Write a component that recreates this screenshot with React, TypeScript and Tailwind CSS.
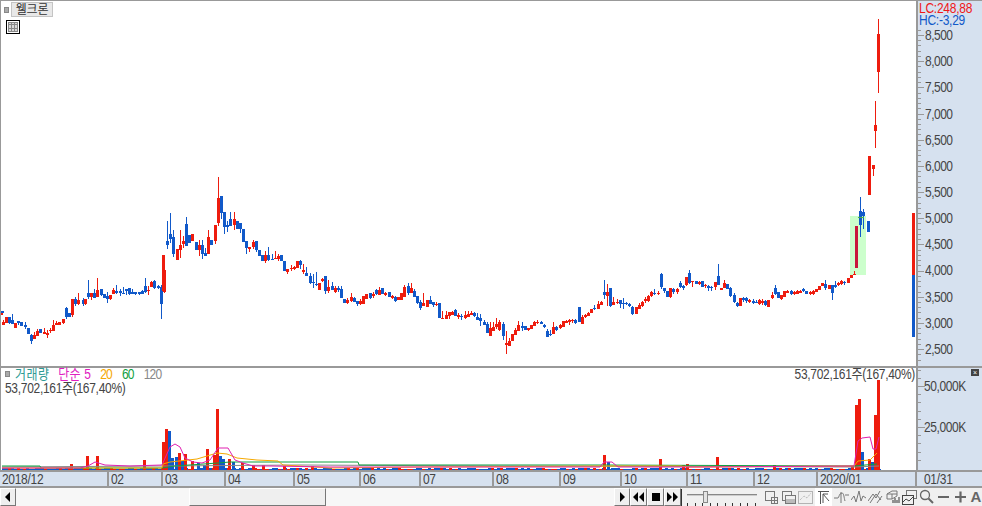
import React from "react";

type C = { x: number; t: number; b: number; wt: number; wb: number; c: string };
const RED = "#ee1c0e";
const BLUE = "#1159c9";

function seg(x0: number, y0: number, s: string): C[] {
  return s
    .trim()
    .split(";")
    .map((e) => e.trim())
    .filter(Boolean)
    .map((e) => {
      const p = e.split(" ");
      const px = Number(p[0].slice(1));
      const t = Number(p[1]);
      const b = Number(p[2]);
      const wt = p[3] && p[3] !== "0" ? Number(p[3]) : t;
      const wb = p[4] ? Number(p[4]) : b;
      return {
        x: Math.round(x0 + px / 3),
        t: y0 + t / 3,
        b: y0 + b / 3,
        wt: y0 + wt / 3,
        wb: y0 + wb / 3,
        c: p[0][0] === "r" ? RED : BLUE,
      };
    });
}

const candles: C[] = [
  ...seg(0, 252, "r1 180 190;b4 176 184"),
  ...seg(0, 270, `r7 157 165 150;r16 141 158;b25 141 158 0 162;b34 150 162 132;r43 159 174;b52 153 160 0 165;b61 155 168;b73 165 171 156 177;b82 174 192;b91 195 213 192 222;r100 195 207 186;r109 183 198 178;b118 177 189;r130 186 192 174;r139 189 195 180 204;r148 180 183 174 189;r157 165 183 150;r166 159 165 153;r175 156 165;r187 147 159 0 162;b196 114 141 111 147;b205 128 141;r214 87 135 0 141;b223 87 103 82 108;r232 90 102 69 105;b245 90 102 85 108;r253 87 102 0 105;b262 69 81 30 87;r271 69 81 0 90;b280 69 84 57;r289 60 81 24;b301 57 75 0 78;b310 72 84;b319 78 87 67 99;r328 75 87 0 90;r337 60 72 55;b346 63 69 45 72;b358 63 69 58 78;b367 68 70 51 72;b376 57 63 0 75;b385 54 72 0 75;b394 66 72 57;b403 66 72 0 75;b415 66 72 0 75;b424 63 72 60;b433 48 66 24 70;r442 60 63 48 75;r451 36 51 33;b460 33 54 30 57;b472 48 54 45 57;b481 51 102 45 147;r490 0 66 0 69`),
  ...seg(130, 170, `b109 213 225 153 237;b118 192 207 129 219;b127 201 252 180 260;r139 237 270;r148 225 240 180 265;r157 213 222 198 235;b166 162 228 141;b175 195 219;r184 192 213;b196 216 240;r205 225 240 210 258;b214 225 252 210 266;b223 250 258 234;r232 201 252 180;b241 210 225;r253 165 213 0 221;r262 84 159 21 168;b271 78 128 0 147;b280 126 171 0 192;b289 165 171 153 186;b298 147 168 126;r310 147 165 126 180;b319 153 177;b328 159 177 0 189;b337 177 216;b346 213 234 0 252;r355 231 237 0 246;r367 216 231 210 237;b376 213 240 0 246;b385 240 258;b394 255 273;r403 255 273 243 279;b412 255 270 231 273;b424 267 269 252;r433 264 268 243;r442 258 267 252 273;b451 255 273;b460 273 303;r469 297 306 0 312;r481 294 297 285 303;r490 291 297 288 300;r499 273 294;b508 273 285 270 297;r517 300 306 282 312;b526 309 318 291;b538 318 339 309 342;b547 336 338 312 354;b556 342 345 306 348;r565 339 360;r574 327 333 324 336`),
  ...seg(320, 270, `b13 18 63 0 72;r22 51 63 30 69;b34 48 60 36;r43 54 66 48 69;b52 54 60 48 66;b61 57 84 48;b70 87 99;r79 90 99 84 102;r91 81 93 69 96;b100 84 96 81;b109 93 102 0 108;r118 93 102 87 105;r127 78 102;r136 72 87;b148 69 84 0 87;r157 72 78 66 84;b166 60 72 57 75;r175 60 75 51;b184 54 72;r193 69 75 66 78;b205 66 81;r214 78 84 75 87;b223 81 93 78 96;r232 81 90`),
  ...seg(400, 270, `r1 69 90;r10 51 81 45;b22 48 69 39 75;r31 54 69 39;b40 63 81 57;b49 78 100 0 102;b58 96 114 90 120;r67 99 108 69;r79 90 111;b88 90 102 78;b97 96 105 0 111;r106 102 105 96 108;b115 99 144;r124 144 148 123;r136 135 147 123;r145 126 138 0 147;r154 126 135 123;b163 120 138 117;r172 135 141 129 147;b181 138 141 132 150;r193 135 144 123 147;r202 132 141 123;r211 129 135 123;b220 129 138 126 141;b229 141 150 129;b238 144 153 132 168;b250 156 165 150;b259 162 189 156;r268 174 198 156;r277 171 183 156;r286 162 171 144 178;r295 156 180 150 183;b307 162 198 156 210;r316 219 225 183 252;r325 213 228 204;r334 192 213;r343 180 195 174;r352 165 183 153;b364 168 174 156 183;b373 168 180;r382 174 180 0 183;r391 165 177;r400 156 168 153;r409 156 159 150 162;b421 156 162 153;b430 165 171 162 174;b439 183 201 177;b448 192 195 180 198;r457 171 192 156;b466 171 180 168 183;r478 165 174 162 177;r487 153 171;r496 153 159 150;r505 150 156 147 165;r514 150 154 147 159;b523 150 159 147 162;b535 111 156;r544 141 162 135;r553 135 141 132 144;r562 129 138 126;r571 117 129;b580 114 117 105 120;r592 102 117 93;r601 96 105 93;b610 66 75 30 87;r619 66 78 42 108;b628 54 108 0 111;r637 96 105 81;r649 96 99 87 102;b658 90 102 0 114;b667 99 102 84 117;b676 99 102 96 105;b685 102 108 99 111;b694 111 132 108 135;r706 111 132;r715 105 117 99`),
  ...seg(620, 250, `r64 156 168 153 171;r73 147 153 141 159;r82 138 153 135 156;r91 126 138 123 141;b100 129 132 117 135;r112 129 131 123 135;b121 72 111 69 117;b130 114 123 0 129;b139 123 141;r148 114 141 0 144;b157 117 126 114 132;r169 117 126 114 132;b178 99 111 93 114;b187 108 114 105 120;r196 81 105 0 108;b205 69 99 60 102;r214 93 96 0 111;b226 93 102;r235 96 102 93 105;b244 93 111;r253 105 108 102 114;b262 108 114 105 123;b271 111 114 108 123;r283 96 111 0 120;b292 78 105 42;r301 114 120;r310 99 114 90;b319 102 117;b328 114 138 111 141;b340 135 156 129 159;b349 159 168 156 171;r358 144 168;b367 144 150 141 156;b376 144 153 141 159;r385 150 156 147 159;b397 153 159 147 162;b406 156 159 150;r415 150 162 147 165;r424 153 159 147 165;b433 153 165 150 168;r442 150 171;r454 135 144 126 147;b463 114 132 105 135;b472 126 144;r481 135 147 0 150;r490 123 141;r499 123 129 120;b511 123 132 120 135;r520 126 132 123 135;r529 123 132 120;r538 123 129 120;b547 117 123 114 126;b556 123 132;r568 126 132 123 135;r577 123 132 120 135;r586 117 126;r595 108 120;r604 99 108;b613 102 114 90 120;r625 105 117;b634 105 129 0 150;b643 105 111 93 114;r652 99 105 96 108`),
  ...seg(820, 180, `r61 303 312 300 316;b70 305 310 303 315;r82 294 310;r91 285 295;r100 281 285 273 285;b118 93 135 51 171;b127 96 108 87 147;b141 123 156`),
];

const big = [
  { x: 162, t: 255, b: 291, c: RED },
  { x: 855, t: 226, b: 268, c: "#c8173c" },
  { x: 868, t: 156, b: 195, c: RED },
];

const volBars: [number, number, string][] = [
  [70, 464, RED], [86, 456, RED], [96, 456, RED], [143, 460, RED], [162, 442, RED], [165, 429, RED], [168, 431, BLUE],
  [171, 458, BLUE], [175, 457, BLUE], [178, 453, RED], [181, 461, BLUE], [184, 454, RED], [191, 461, RED], [197, 463, BLUE],
  [203, 465, BLUE], [206, 449, RED], [213, 455, RED], [216, 409, RED], [219, 456, BLUE], [222, 459, BLUE], [228, 459, RED],
  [232, 462, BLUE], [241, 463, RED], [252, 465, RED], [262, 465, RED], [283, 466, RED], [311, 466, RED], [603, 455, RED],
  [607, 462, BLUE], [659, 459, RED], [682, 465, RED], [686, 464, RED], [716, 457, RED], [773, 465, RED], [851, 466, RED],
  [855, 405, RED], [858, 399, RED], [861, 452, BLUE], [868, 459, RED], [871, 462, BLUE], [874, 415, RED], [877, 380, RED],
];

function baseStrip() {
  const out: React.ReactNode[] = [];
  let n = 0;
  for (let x = 2; x < 880; x += 3) {
    n = (n * 31 + 17) % 97;
    const h = 1 + (n % 2);
    out.push(<rect key={x} x={x} y={470 - h} width={3} height={h} fill={n % 3 ? BLUE : RED} />);
  }
  return out;
}

const magenta =
  "2,468 80,468 88,466 95,462 105,465 130,466 162,465 170,447 175,444 180,447 185,458 193,462 202,463 210,460 218,448 228,448 235,460 243,463 253,466 270,466 330,467 420,467 600,467 604,462 612,462 618,467 700,467 854,466 858,441 862,438 870,437 873,449 876,449 879,437";
const orange =
  "2,468 162,468 163,464 170,462 197,459 217,453 227,454 237,458 257,460 278,461 283,465 330,468 420,467 605,466 680,466 690,467 854,466 858,461 870,460 877,453";
const green = "2,466 40,466 41,468 162,468 175,466 218,463 230,462 358,462 359,465 600,465 854,466 877,464";
const gray = "2,467 160,466 300,465 500,466 854,467 879,466";

const priceLabels = ["8,500", "8,000", "7,500", "7,000", "6,500", "6,000", "5,500", "5,000", "4,500", "4,000", "3,500", "3,000", "2,500"];
const dates: [string, number][] = [
  ["2018/12", 108], ["02", 54], ["03", 63], ["04", 69], ["05", 66], ["06", 60], ["07", 73], ["08", 67], ["09", 61], ["10", 66], ["11", 67], ["12", 63], ["2020/01", 99],
];

const btn3d = "border border-t-white border-l-white border-r-[#777] border-b-[#777] bg-[#efefef] shadow-[1px_1px_0_#333]";

function T({ children, className = "" }: { children: React.ReactNode; className?: string }) {
  return <span className={`inline-block whitespace-nowrap scale-y-[1.15] leading-[10px] ${className}`}>{children}</span>;
}

function TB({ children, w = 15 }: { children: React.ReactNode; w?: number }) {
  return (
    <svg width={w} height={16} viewBox={`0 0 ${w} 16`} fill="none" stroke="#777" strokeWidth={1}>
      {children}
    </svg>
  );
}

export default function App() {
  return (
    <div className="w-[982px] h-[506px] flex flex-col bg-white overflow-hidden text-[12px] leading-[14px] tracking-[-0.3px] text-[#444] font-['Liberation_Sans','Noto_Sans_CJK_KR',sans-serif]">
      {/* price pane */}
      <div className="h-[366px] flex border-t border-[#999]">
        <div className="relative w-[916px] border-l border-[#999]">
          <svg width={915} height={365} viewBox="1 1 915 365" shapeRendering="crispEdges" className="block">
            <rect x={850} y={216} width={16} height={59} fill="#ccffcc" />
            {candles.map((c, i) => (
              <g key={i} fill={c.c}>
                <rect x={c.x + 1} y={c.wt} width={1} height={Math.max(0, c.wb - c.wt)} />
                <rect x={c.x} y={c.t} width={3} height={Math.max(1, c.b - c.t)} />
              </g>
            ))}
            {big.map((b, i) => (
              <rect key={i} x={b.x} y={b.t} width={3} height={b.b - b.t} fill={b.c} />
            ))}
            <rect x={858} y={217} width={6} height={1} fill="#4caf50" />
            <rect x={872} y={165} width={3} height={4} fill={RED} />
            <rect x={873} y={165} width={1} height={11} fill={RED} />
            <rect x={875} y={101} width={1} height={47} fill={RED} />
            <rect x={874} y={125} width={3} height={6} fill={RED} />
            <rect x={878} y={19} width={1} height={74} fill={RED} />
            <rect x={877} y={34} width={3} height={38} fill={RED} />
            <rect x={912} y={213} width={3} height={62} fill={RED} />
            <rect x={912} y={275} width={3} height={62} fill={BLUE} />
          </svg>
          <div className="absolute left-[3px] top-[1px] flex flex-col items-start">
            <div className="flex items-center gap-[2px]">
              <span className="w-[5px] h-[6px] bg-[#aaa] border border-[#888]" />
              <span className="h-[15px] w-[42px] flex items-center justify-center bg-[#e8e8e8] border border-[#c4c4c4] whitespace-nowrap tracking-[-0.2px] text-[#333]">웰크론</span>
            </div>
            <div className="mt-[3px] ml-[2px] w-[14px] h-[14px] border border-black p-[1px]">
              <svg width={10} height={10} viewBox="0 0 10 10" fill="#d8d8d8" stroke="#888" shapeRendering="crispEdges" className="block">
                <rect x={0.5} y={0.5} width={9} height={9} />
                <path d="M3.5 0V10M6.5 0V10M0 2.5H10M0 6.5H10" />
              </svg>
            </div>
          </div>
        </div>
        <div className="relative w-[66px] bg-[#d6e1ef] border-l-2 border-[#999] pt-[21px]">
          <svg width={8} height={365} className="absolute left-0 top-0" shapeRendering="crispEdges">
            {Array.from({ length: 64 }).map((_, i) => (
              <rect key={i} x={0} y={28.77 + i * 5.235} width={i % 5 === 1 ? 6 : 3} height={1} fill="#999" />
            ))}
          </svg>
          <div className="absolute left-[1px] top-[2px] flex flex-col gap-[2px] tracking-[-0.25px]">
            <T className="text-[#f01818]">LC:248,88</T>
            <T className="text-[#1159c9]">HC:-3,29</T>
          </div>
          {priceLabels.map((p) => (
            <div key={p} className="h-[26.17px] flex items-center pl-[7px] tracking-[-0.5px]"><T>{p}</T></div>
          ))}
        </div>
      </div>

      {/* volume pane */}
      <div className="h-[104px] flex border-t-2 border-[#999]">
        <div className="relative w-[916px] border-l border-[#999]">
          <svg width={915} height={102} viewBox="1 368 915 102" className="block">
            <g shapeRendering="crispEdges">
              {baseStrip()}
              {volBars.map(([x, y, c], i) => (
                <rect key={i} x={x} y={y} width={3} height={470 - y} fill={c} />
              ))}
            </g>
            <g fill="none" strokeWidth={1}>
              <polyline points={gray} stroke="#888" />
              <polyline points={green} stroke="#0fa040" />
              <polyline points={orange} stroke="#f5a800" />
              <polyline points={magenta} stroke="#e020b0" />
            </g>
          </svg>
          <div className="absolute left-[4px] top-0 flex flex-col">
            <div className="flex items-center gap-[5px] h-[12px]">
              <span className="w-[5px] h-[6px] bg-[#aaa] border border-[#888]" />
              <span className="flex items-center gap-[9px]">
                <T className="text-[#2e9b94] tracking-[0.4px]">거래량</T>
                <T className="text-[#e020c0] tracking-[0.2px]">단순 5</T>
                <T className="text-[#f5a800] tracking-[-0.8px]">20</T>
                <T className="text-[#0fa040] tracking-[-0.8px] ml-[1px]">60</T>
                <T className="text-[#888] tracking-[-0.8px] ml-[1px]">120</T>
              </span>
            </div>
            <div className="h-[14px] mt-[1px] flex items-center"><T>53,702,161주(167,40%)</T></div>
          </div>
          <div className="absolute right-[1px] top-0 h-[12px] flex items-center"><T>53,702,161주(167,40%)</T></div>
        </div>
        <div className="relative w-[66px] bg-[#d6e1ef] border-l-2 border-[#999] pt-[11px]">
          <svg width={8} height={102} className="absolute left-0 top-0" shapeRendering="crispEdges">
            {Array.from({ length: 12 }).map((_, i) => (
              <rect key={i} x={0} y={1.6 + i * 8.2} width={(i - 2) % 5 === 0 ? 7 : 3} height={1} fill="#999" />
            ))}
          </svg>
          <span className="absolute right-[3px] top-[1px] w-[8px] h-[7px] bg-[#444] flex items-center justify-center text-white text-[7px] leading-[7px]">×</span>
          <div className="h-[14px] flex items-center pl-[6px] tracking-[-0.4px]"><T>50,000K</T></div>
          <div className="h-[14px] flex items-center mt-[27px] pl-[6px] tracking-[-0.4px]"><T>25,000K</T></div>
        </div>
      </div>

      {/* date axis */}
      <div className="h-[18px] flex bg-[#d6e1ef] border-t-2 border-b-2 border-[#999]">
        {dates.map(([d, w], i) => (
          <div key={d} className="flex items-center border-r-2 border-[#999] pl-[2px] shrink-0" style={{ width: i === 0 ? w + 1 : w }}><T>{d}</T></div>
        ))}
        <div className="flex items-center pl-[8px] -ml-[1px]"><T>01/31</T></div>
      </div>

      {/* scrollbar and toolbar */}
      <div className="h-[18px] flex items-stretch bg-[#f0f0f0]">
        <div className={`w-[16px] flex items-center justify-center ${btn3d}`}>
          <svg width={6} height={10} viewBox="0 0 6 10"><path d="M5 0V10L0 5Z" fill="#000" /></svg>
        </div>
        <div className="w-[173px] bg-[#f7f7f7]" />
        <div className={`w-[137px] ${btn3d}`} />
        <div className="w-[288px] bg-[#f7f7f7]" />
        <div className="flex">
          <div className={`w-[16px] flex items-center justify-center ${btn3d}`}>
            <svg width={6} height={10} viewBox="0 0 6 10"><path d="M1 0V10L6 5Z" fill="#000" /></svg>
          </div>
          <div className={`w-[17px] flex items-center justify-center ${btn3d}`}>
            <svg width={11} height={10} viewBox="0 0 11 10"><path d="M5 0V10L0 5ZM11 0V10L6 5Z" fill="#000" /></svg>
          </div>
          <div className={`w-[17px] flex items-center justify-center ${btn3d}`}>
            <span className="w-[8px] h-[8px] bg-black" />
          </div>
          <div className={`w-[17px] flex items-center justify-center ${btn3d}`}>
            <svg width={11} height={10} viewBox="0 0 11 10"><path d="M0 0V10L5 5ZM6 0V10L11 5Z" fill="#000" /></svg>
          </div>
        </div>
        <svg width={76} height={18} viewBox="0 0 76 18" className="ml-[3px]" shapeRendering="crispEdges">
          <rect x={3} y={6} width={70} height={1} fill="#888" />
          <rect x={3} y={7} width={70} height={1} fill="#ccc" />
          <rect x={19} y={3} width={4} height={11} fill="#e4e4e4" stroke="#888" />
          {Array.from({ length: 10 }).map((_, i) => (
            <rect key={i} x={3 + i * 7.5} y={15} width={1} height={3} fill="#333" />
          ))}
        </svg>
        <div className="flex items-center gap-[2px] ml-[4px]">
          <TB>
            <rect x={1.5} y={2.5} width={9} height={9} />
            <rect x={7.5} y={8.5} width={6} height={6} fill="#f0f0f0" />
            <path d="M10.5 8.5V14.5M7.5 11.5H13.5" />
          </TB>
          <TB>
            <rect x={1.5} y={2.5} width={9} height={9} />
            <rect x={4.5} y={6.5} width={10} height={8} fill="#f0f0f0" />
            <rect x={5} y={10} width={9} height={4} fill="#bbb" stroke="none" />
          </TB>
          <TB>
            <path d="M0.5 2.5H14.5V14.5H0.5Z" strokeDasharray="1 1" />
            <path d="M2 11L6 7L9 9L13 4" stroke="#aaa" strokeDasharray="1 1" />
          </TB>
          <div className="w-[17px] h-[18px] bg-white flex items-center justify-center">
            <TB>
              <path d="M2 2.5H13M4.5 2.5V15M7 5V14M7 5H12M7 5L13 12" stroke="#555" />
            </TB>
          </div>
          <TB>
            <path d="M0 9H4C5 9 5 4 8 4C10 4 10 9 11 12M7 3V14M11 6H15" />
          </TB>
          <TB>
            <path d="M0 11L3 7L5 13L8 2L10 12L12 7L15 9" />
          </TB>
          <TB>
            <path d="M0 12L5 5L8 9L12 2M2 14L8 5L13 11M9 14L14 7" />
          </TB>
          <TB>
            <path d="M2 5L7 2H12V7L7 10H2ZM7 5H12M7 5V10M2 5H7" />
            <path d="M8 14V11M10 14V9M12 14V11M14 14V8" stroke="#333" />
          </TB>
          <TB>
            <rect x={4.5} y={1.5} width={10} height={8} />
            <rect x={0.5} y={6.5} width={11} height={9} fill="#f0f0f0" stroke="#444" />
            <path d="M1 13L4 10L7 12L11 8" stroke="#444" />
          </TB>
          <TB>
            <circle cx={6} cy={6} r={4.5} strokeWidth={1.3} stroke="#666" />
            <path d="M9.5 9.5L14 14" strokeWidth={2} stroke="#666" />
          </TB>
          <TB>
            <path d="M2 8H13" strokeWidth={2} stroke="#666" />
          </TB>
          <TB>
            <path d="M2 8H13M7.5 2.5V13.5" strokeWidth={2.2} stroke="#666" />
          </TB>
          <span className="w-[12px] text-[15px] font-bold text-[#666] leading-[16px] tracking-normal text-center">A</span>
        </div>
      </div>
    </div>
  );
}
